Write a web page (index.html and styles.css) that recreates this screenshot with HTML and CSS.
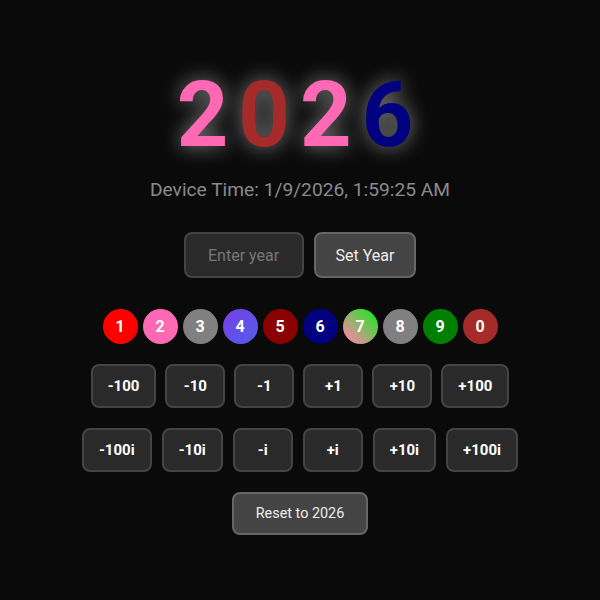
FILE: index.html
```html
<!DOCTYPE html>
<html>
<head>
<meta charset="utf-8">
<link rel="stylesheet" href="styles.css">
</head>
<body>
<div class="app">
  <div class="year">
    <span class="d-pink">2</span><span class="d-brown">0</span><span class="d-pink">2</span><span class="d-navy">6</span>
  </div>
  <div class="device-time">Device Time: 1/9/2026, 1:59:25 AM</div>
  <div class="set-row">
    <input class="year-input" type="text" placeholder="Enter year">
    <button class="set-btn">Set Year</button>
  </div>
  <div class="balls">
    <span class="ball b1">1</span>
    <span class="ball b2">2</span>
    <span class="ball b3">3</span>
    <span class="ball b4">4</span>
    <span class="ball b5">5</span>
    <span class="ball b6">6</span>
    <span class="ball b7">7</span>
    <span class="ball b8">8</span>
    <span class="ball b9">9</span>
    <span class="ball b0">0</span>
  </div>
  <div class="step-row row-real">
    <button class="step">-100</button>
    <button class="step">-10</button>
    <button class="step">-1</button>
    <button class="step">+1</button>
    <button class="step">+10</button>
    <button class="step">+100</button>
  </div>
  <div class="step-row row-imag">
    <button class="step">-100i</button>
    <button class="step">-10i</button>
    <button class="step">-i</button>
    <button class="step">+i</button>
    <button class="step">+10i</button>
    <button class="step">+100i</button>
  </div>
  <button class="reset">Reset to 2026</button>
</div>
</body>
</html>
```

FILE: styles.css
```css
html, body {
  margin: 0;
  padding: 0;
  background: #0a0a0a;
}
body {
  width: 600px;
  height: 600px;
  overflow: hidden;
  font-family: Roboto, "Liberation Sans", sans-serif;
  color: #fff;
}
.app {
  display: flex;
  flex-direction: column;
  align-items: center;
  padding-top: 71px;
}
.year {
  font-size: 90px;
  line-height: 90px;
  font-weight: 700;
  letter-spacing: 10px;
  text-shadow: 0 0 20px rgba(255, 255, 255, 0.5);
}
.d-pink { color: #ff69b4; }
.d-brown { color: #a52a2a; }
.d-navy { color: #000080; }
.device-time {
  margin-top: 17px;
  font-size: 19.2px;
  line-height: 24px;
  color: #8a8a8a;
}
.set-row {
  margin-top: 30px;
  display: flex;
  gap: 10px;
}
.year-input {
  box-sizing: border-box;
  width: 120px;
  height: 46px;
  padding: 0 8px;
  background: #2a2a2a;
  border: 2px solid #444;
  border-radius: 8px;
  color: #fff;
  font-family: Roboto, "Liberation Sans", sans-serif;
  font-size: 16px;
  text-align: center;
  outline: none;
}
.year-input::placeholder {
  color: #777;
}
.set-btn {
  box-sizing: border-box;
  height: 46px;
  padding: 0 20px;
  background: #444;
  border: 2px solid #666;
  border-radius: 8px;
  color: #eee;
  font-family: Roboto, "Liberation Sans", sans-serif;
  font-size: 16px;
}
.balls {
  margin-top: 31px;
  display: flex;
  gap: 5px;
}
.ball {
  width: 35px;
  height: 35px;
  border-radius: 50%;
  display: flex;
  align-items: center;
  justify-content: center;
  font-size: 16px;
  font-weight: 700;
  color: #fff;
}
.b1 { background: #ff0000; }
.b2 { background: #ff69b4; }
.b3 { background: #808080; }
.b4 { background: linear-gradient(135deg, #7a3ee6, #4f5fe8); }
.b5 { background: #8b0000; }
.b6 { background: #000080; }
.b7 { background: linear-gradient(45deg, #f08aa0 15%, #2ee02e 85%); }
.b8 { background: #808080; }
.b9 { background: #008000; }
.b0 { background: #a52a2a; }
.step-row {
  margin-top: 20px;
  display: flex;
}
.row-real { gap: 9px; }
.row-imag { gap: 10px; }
.step {
  box-sizing: border-box;
  min-width: 60px;
  height: 44px;
  padding: 0 15px;
  background: #2a2a2a;
  border: 2px solid #444;
  border-radius: 8px;
  color: #fff;
  font-family: Roboto, "Liberation Sans", sans-serif;
  font-size: 15px;
  font-weight: 700;
}
.reset {
  margin-top: 20px;
  box-sizing: border-box;
  height: 43px;
  padding: 0 22px;
  background: #444;
  border: 2px solid #666;
  border-radius: 8px;
  color: #eee;
  font-family: Roboto, "Liberation Sans", sans-serif;
  font-size: 14.4px;
}
```
